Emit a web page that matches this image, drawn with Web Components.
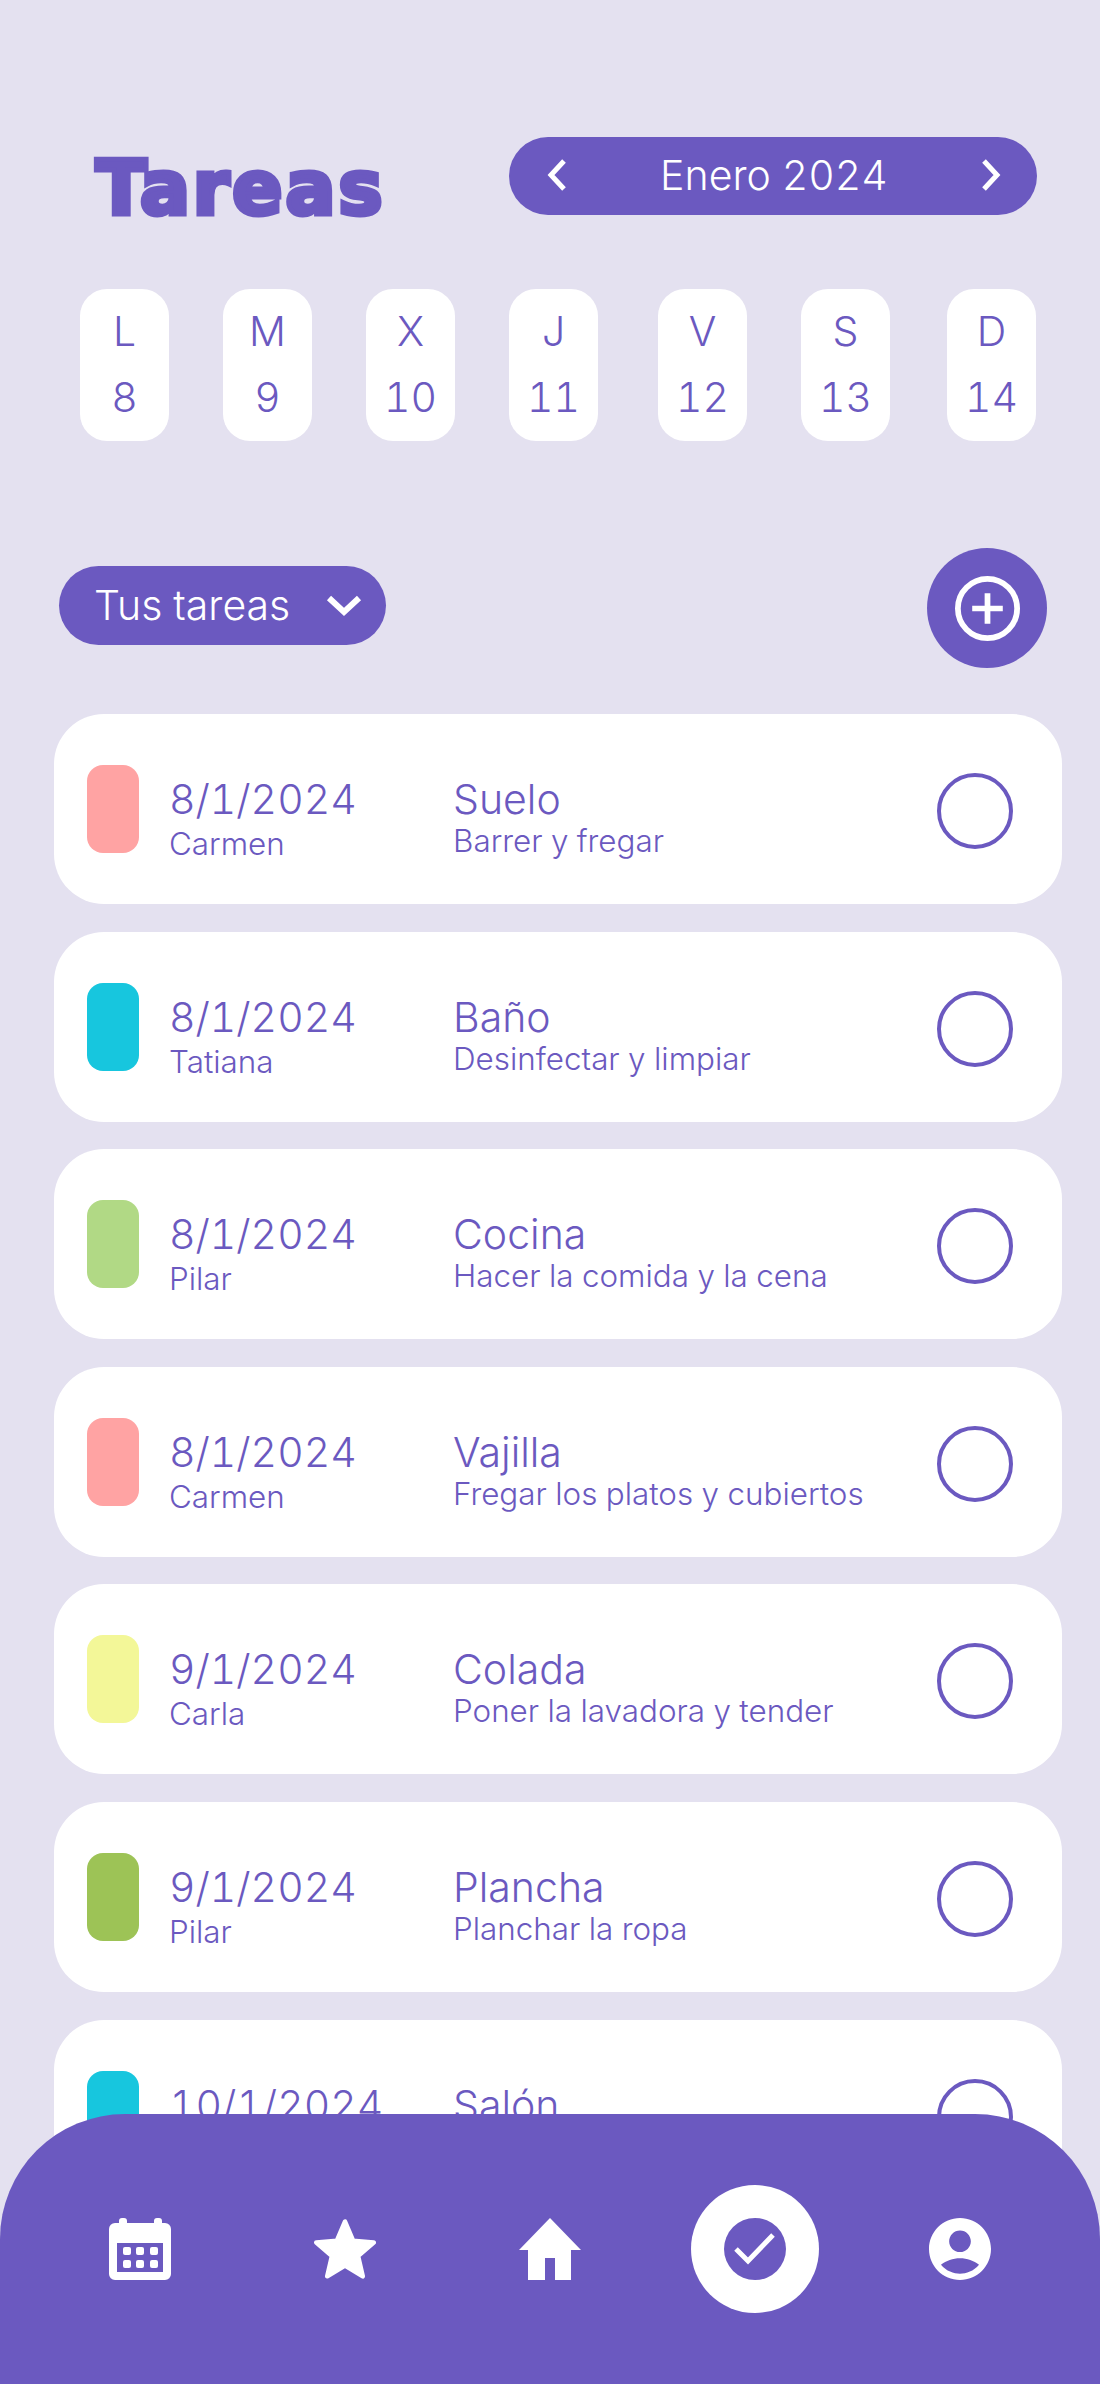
<!DOCTYPE html>
<html lang="es">
<head>
<meta charset="utf-8">
<title>Tareas</title>
<style>
  html, body { margin: 0; height: 100%; }
  body { background: #e4e1f0; font-family: Inter, "Liberation Sans", sans-serif; color: #6b59c0; overflow: hidden; font-variant-numeric: tabular-nums; }
</style>
</head>
<body>
<tasks-screen>
  <month-picker slot="header">Enero 2024</month-picker>
  <day-chip slot="days" letter="L" day="8"></day-chip>
  <day-chip slot="days" letter="M" day="9"></day-chip>
  <day-chip slot="days" letter="X" day="10"></day-chip>
  <day-chip slot="days" letter="J" day="11" style="margin-right:6px"></day-chip>
  <day-chip slot="days" letter="V" day="12"></day-chip>
  <day-chip slot="days" letter="S" day="13" style="margin-right:3px"></day-chip>
  <day-chip slot="days" letter="D" day="14"></day-chip>
  <filter-pill slot="toolbar">Tus tareas</filter-pill>
  <add-button slot="toolbar"></add-button>
  <task-card color="#ffa3a3" date="8/1/2024" who="Carmen" title="Suelo" detail="Barrer y fregar"></task-card>
  <task-card color="#17c6de" date="8/1/2024" who="Tatiana" title="Baño" detail="Desinfectar y limpiar"></task-card>
  <task-card color="#b1d985" date="8/1/2024" who="Pilar" title="Cocina" detail="Hacer la comida y la cena"></task-card>
  <task-card color="#ffa3a3" date="8/1/2024" who="Carmen" title="Vajilla" detail="Fregar los platos y cubiertos"></task-card>
  <task-card color="#f3f798" date="9/1/2024" who="Carla" title="Colada" detail="Poner la lavadora y tender"></task-card>
  <task-card color="#9dc356" date="9/1/2024" who="Pilar" title="Plancha" detail="Planchar la ropa"></task-card>
  <task-card color="#17c6de" date="10/1/2024" who="Tatiana" title="Salón" detail="Aspirar y quitar el polvo"></task-card>
</tasks-screen>
<script>
const ICONS = {
  calendar: `<svg viewBox="0 0 62 62"><path fill="#fff" fill-rule="evenodd" d="M6 5h4V3a3 3 0 0 1 3-3h2a3 3 0 0 1 3 3v2h27V3a3 3 0 0 1 3-3h2a3 3 0 0 1 3 3v2h3a6 6 0 0 1 6 6v45a6 6 0 0 1-6 6H6a6 6 0 0 1-6-6V11a6 6 0 0 1 6-6zM8 25v29h46V25z"/><g fill="#fff"><rect x="14" y="29" width="8" height="8" rx="2"/><rect x="27" y="29" width="8" height="8" rx="2"/><rect x="41" y="29" width="8" height="8" rx="2"/><rect x="14" y="42" width="8" height="8" rx="2"/><rect x="27" y="42" width="8" height="8" rx="2"/><rect x="41" y="42" width="8" height="8" rx="2"/></g></svg>`,
  star: `<svg viewBox="1.2 1.2 21.6 20.6"><path fill="#fff" stroke="#fff" stroke-width="1.6" stroke-linejoin="round" d="M12 17.27 18.18 21l-1.64-7.03L22 9.24l-7.19-.61L12 2 9.19 8.63 2 9.24l5.46 4.73L5.82 21z"/></svg>`,
  home: `<svg viewBox="0 0 62 62"><path fill="#fff" d="M31 0 62 32H52V62H36V40H26V62H9V32H0z"/></svg>`,
  check: `<svg viewBox="0 0 62 62"><circle cx="31" cy="31" r="31" fill="#6b59c0"/><path fill="none" stroke="#fff" stroke-width="5" d="m12 31 12 12 25-26"/></svg>`,
  user: `<svg viewBox="2 2 20 20"><path fill="#fff" d="M12 2C6.48 2 2 6.48 2 12s4.48 10 10 10 10-4.48 10-10S17.52 2 12 2zm0 4c1.93 0 3.5 1.57 3.5 3.5S13.93 13 12 13s-3.5-1.57-3.5-3.5S10.07 6 12 6zm0 14c-2.03 0-4.43-.82-6.14-2.88C7.55 15.8 9.68 15 12 15s4.45.8 6.14 2.12C16.43 19.18 14.03 20 12 20z"/></svg>`
};

customElements.define('tasks-screen', class TasksScreen extends HTMLElement {
  constructor() {
    super();
    this.attachShadow({mode: 'open'}).innerHTML = `<style>
      :host { display: block; position: relative; height: 2384px; overflow: hidden; }
      header { display: flex; justify-content: space-between; align-items: flex-start; padding: 137px 63px 0 96px; }
      h1 { margin: 15px 0 0; font: 700 74px/72px "DejaVu Sans", sans-serif; -webkit-text-stroke: 5px #6b59c0; letter-spacing: 3px; }
      .days { display: flex; gap: 54px; padding: 65px 63px 0 80px; }
      .toolbar { display: flex; justify-content: space-between; align-items: flex-start; padding: 107px 53px 0 59px; }
      .list { display: flex; flex-direction: column; gap: 27.6px; padding: 46px 38px 0 54px; }
    </style>
    <header><h1>Tareas</h1><slot name="header"></slot></header>
    <div class="days"><slot name="days"></slot></div>
    <div class="toolbar"><slot name="toolbar"></slot></div>
    <div class="list"><slot></slot></div>
    <bottom-nav></bottom-nav>`;
  }
});

customElements.define('month-picker', class MonthPicker extends HTMLElement {
  constructor() {
    super();
    this.attachShadow({mode: 'open'}).innerHTML = `<style>
      :host { display: flex; align-items: center; justify-content: space-between; box-sizing: border-box; width: 528px; height: 78px; padding: 0 35px 3px 37px; border-radius: 39px; background: #6b59c0; color: #fff; font-size: 41px; font-weight: 300; }
      svg { width: 22px; height: 34px; }
    </style>
    <svg viewBox="0 0 22 34"><path fill="none" stroke="#fff" stroke-width="5" d="M18 3 5 17l13 14"/></svg>
    <slot></slot>
    <svg viewBox="0 0 22 34"><path fill="none" stroke="#fff" stroke-width="5" d="m4 3 13 14L4 31"/></svg>`;
  }
});

customElements.define('day-chip', class DayChip extends HTMLElement {
  constructor() {
    super();
    this.attachShadow({mode: 'open'}).innerHTML = `<style>
      :host { display: flex; flex-direction: column; align-items: center; box-sizing: border-box; width: 89px; height: 152px; padding-top: 19px; border-radius: 27px; background: #fff; font-size: 41px; font-weight: 300; line-height: 47px; gap: 19px; }
    </style>
    <span>${this.getAttribute('letter')}</span>
    <span>${this.getAttribute('day')}</span>`;
  }
});

customElements.define('filter-pill', class FilterPill extends HTMLElement {
  constructor() {
    super();
    this.attachShadow({mode: 'open'}).innerHTML = `<style>
      :host { display: flex; align-items: center; justify-content: space-between; box-sizing: border-box; width: 327px; height: 79px; margin-top: 18px; padding: 0 24px 2px 35px; border-radius: 40px; background: #6b59c0; color: #fff; font-size: 41px; font-weight: 300; }
      svg { width: 36px; height: 22px; margin-top: 2px; }
    </style>
    <slot></slot>
    <svg viewBox="0 0 36 22"><path fill="none" stroke="#fff" stroke-width="6" d="m3 3 15 14L33 3"/></svg>`;
  }
});

customElements.define('add-button', class AddButton extends HTMLElement {
  constructor() {
    super();
    this.attachShadow({mode: 'open'}).innerHTML = `<style>
      :host { display: flex; align-items: center; justify-content: center; width: 120px; height: 120px; border-radius: 50%; background: #6b59c0; }
      svg { width: 65px; height: 65px; }
    </style>
    <svg viewBox="0 0 68 68"><circle cx="34" cy="34" r="31" fill="none" stroke="#fff" stroke-width="6"/><path fill="none" stroke="#fff" stroke-width="6" d="M34 18v32M18 34h32"/></svg>`;
  }
});

customElements.define('task-card', class TaskCard extends HTMLElement {
  constructor() {
    super();
    this.attachShadow({mode: 'open'}).innerHTML = `<style>
      :host { display: flex; align-items: flex-start; box-sizing: border-box; flex: none; height: 190px; padding: 51px 49px 0 33px; border-radius: 50px; background: #fff; }
      .swatch { flex: none; width: 52px; height: 88px; border-radius: 16px; background: ${this.getAttribute('color')}; }
      .when { flex: none; width: 284px; margin-left: 30px; }
      .what { flex: 1; }
      .big { font-size: 41px; font-weight: 300; line-height: 46px; margin-top: 11px; }
      .small { font-size: 31.4px; font-weight: 300; line-height: 34px; margin-top: 2px; }
      .when .small { margin-top: 5px; }
      .ring { flex: none; width: 76px; height: 76px; margin-top: 8px; box-sizing: border-box; border: 4px solid #6b59c0; border-radius: 50%; }
    </style>
    <div class="swatch"></div>
    <div class="when"><div class="big">${this.getAttribute('date')}</div><div class="small">${this.getAttribute('who')}</div></div>
    <div class="what"><div class="big">${this.getAttribute('title')}</div><div class="small">${this.getAttribute('detail')}</div></div>
    <div class="ring"></div>`;
  }
});

customElements.define('bottom-nav', class BottomNav extends HTMLElement {
  constructor() {
    super();
    this.attachShadow({mode: 'open'}).innerHTML = `<style>
      :host { position: absolute; left: 0; right: 0; bottom: 0; height: 270px; box-sizing: border-box; padding: 71px 38px 0 38px; display: grid; grid-template-columns: repeat(5, 204.8px); justify-items: center; align-items: start; border-radius: 125px 125px 0 0; background: #6b59c0; }
      .icon { width: 62px; height: 62px; margin-top: 33px; }
      .icon svg { display: block; width: 100%; height: 100%; }
      .active { width: 128px; height: 128px; border-radius: 50%; background: #fff; display: flex; align-items: center; justify-content: center; }
      .active svg { width: 62px; height: 62px; }
    </style>
    <div class="icon">${ICONS.calendar}</div>
    <div class="icon">${ICONS.star}</div>
    <div class="icon">${ICONS.home}</div>
    <div class="active">${ICONS.check}</div>
    <div class="icon">${ICONS.user}</div>`;
  }
});
</script>
</body>
</html>
